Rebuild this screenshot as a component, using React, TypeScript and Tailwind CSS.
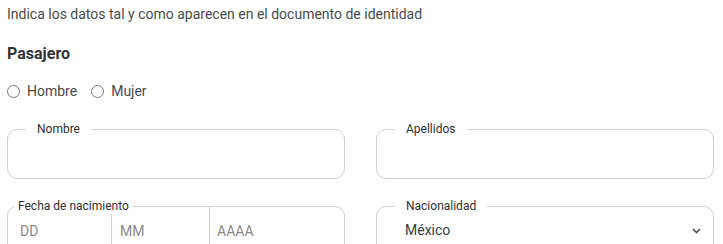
const labelFont = { fontFamily: 'Roboto, "Liberation Sans", sans-serif' };

const Radio = ({ label }: { label: string }) => (
  <label className="flex items-center gap-[7px]">
    <span className="h-[13px] w-[13px] rounded-full border border-[#7a7a7a]" />
    <span>{label}</span>
  </label>
);

const Field = ({ label }: { label: string }) => (
  <fieldset className="rounded-[10px] border border-[#d3cfcd]">
    <legend className="ml-[18px] px-[11px] text-xs leading-4 text-[#2f2f2f]">
      {label}
    </legend>
    <div className="h-[41px]" />
  </fieldset>
);

export default function App() {
  return (
    <div
      className="bg-white pl-[7px] pr-[9px] pt-1 text-[#4a4a4a]"
      style={labelFont}
    >
      <p className="text-sm leading-5">
        Indica los datos tal y como aparecen en el documento de identidad
      </p>
      <h2 className="mt-[18px] text-base leading-6 font-bold text-[#333]">Pasajero</h2>
      <div className="mt-[15px] flex items-center gap-[14px] text-sm leading-5">
        <Radio label="Hombre" />
        <Radio label="Mujer" />
      </div>

      <div className="mt-5 grid grid-cols-2 gap-x-[31px] gap-y-[19px]">
        <Field label="Nombre" />
        <Field label="Apellidos" />

        <fieldset className="rounded-[10px] border border-[#d3cfcd]">
          <legend className="ml-[6px] px-[4px] text-xs leading-4 text-[#2f2f2f]">
            Fecha de nacimiento
          </legend>
          <div className="flex h-[40px] items-start text-sm text-[#8a8a8a]">
            <div className="flex h-full w-[103px] items-start pl-3 pt-[7px]">DD</div>
            <div className="flex h-full w-[98px] items-start border-l border-[#d3cfcd] pl-2 pt-[7px]">
              MM
            </div>
            <div className="-mt-2 flex h-[48px] flex-1 items-start border-l border-[#d3cfcd] pl-[7px] pt-[15px]">
              AAAA
            </div>
          </div>
        </fieldset>

        <fieldset className="rounded-[10px] border border-[#d3cfcd]">
          <legend className="ml-[18px] px-[11px] text-xs leading-4 text-[#2f2f2f]">
            Nacionalidad
          </legend>
          <div className="flex h-[40px] items-start justify-between pl-[28px] pr-[12px] pt-[6px] text-sm text-[#3a3a3a]">
            <span>México</span>
            <svg className="mt-[8px]" width="9" height="6" viewBox="0 0 9 6" fill="none">
              <path d="M1 1l3.5 3.5L8 1" stroke="#3a3a3a" strokeWidth="1.4" />
            </svg>
          </div>
        </fieldset>
      </div>
    </div>
  );
}
